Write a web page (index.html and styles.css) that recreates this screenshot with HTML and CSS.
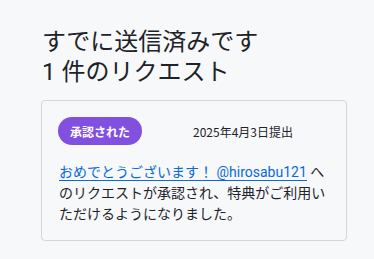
FILE: index.html
```html
<!DOCTYPE html>
<html lang="ja">
<head>
<meta charset="utf-8">
<link rel="stylesheet" href="styles.css">
</head>
<body>
<main class="page">
  <h1 class="title">すでに送信済みです<br>1 件のリクエスト</h1>
  <section class="card">
    <div class="card-head">
      <span class="label">承認された</span>
      <span class="date">2025年4月3日提出</span>
    </div>
    <p class="message"><a class="link" href="#">おめでとうございます！ @hirosabu121</a> へのリクエストが承認され、特典がご利用いただけるようになりました。</p>
  </section>
</main>
</body>
</html>
```
FILE: styles.css
```css
html, body {
  margin: 0;
  padding: 0;
  background: #f6f8fa;
}
body {
  font-family: Roboto, "Noto Sans CJK JP", "Noto Sans", sans-serif;
  color: #1f2328;
}
.page {
  padding: 27px 27px 0 41px;
}
.title {
  margin: 0 0 13px 1px;
  font-size: 24px;
  line-height: 30px;
  font-weight: 400;
}
.card {
  border: 1px solid #d0d7de;
  border-radius: 4px;
  padding: 16px 16px 15px 16px;
}
.card-head {
  display: flex;
  align-items: center;
}
.label {
  display: inline-flex;
  align-items: center;
  height: 28px;
  padding: 0 12px;
  border-radius: 14px;
  background: #8250df;
  color: #fff;
  font-family: "Noto Sans CJK JP", sans-serif;
  font-size: 12px;
  font-weight: 700;
}
.date {
  margin-left: 51px;
  font-family: "Noto Sans CJK JP", sans-serif;
  font-size: 12px;
}
.message {
  margin: 17px 0 0 1px;
  font-size: 14px;
  line-height: 21px;
  padding-right: 2px;
}
.link {
  color: #0969da;
  text-decoration: none;
  border-bottom: 1px solid #0969da;
}
```
